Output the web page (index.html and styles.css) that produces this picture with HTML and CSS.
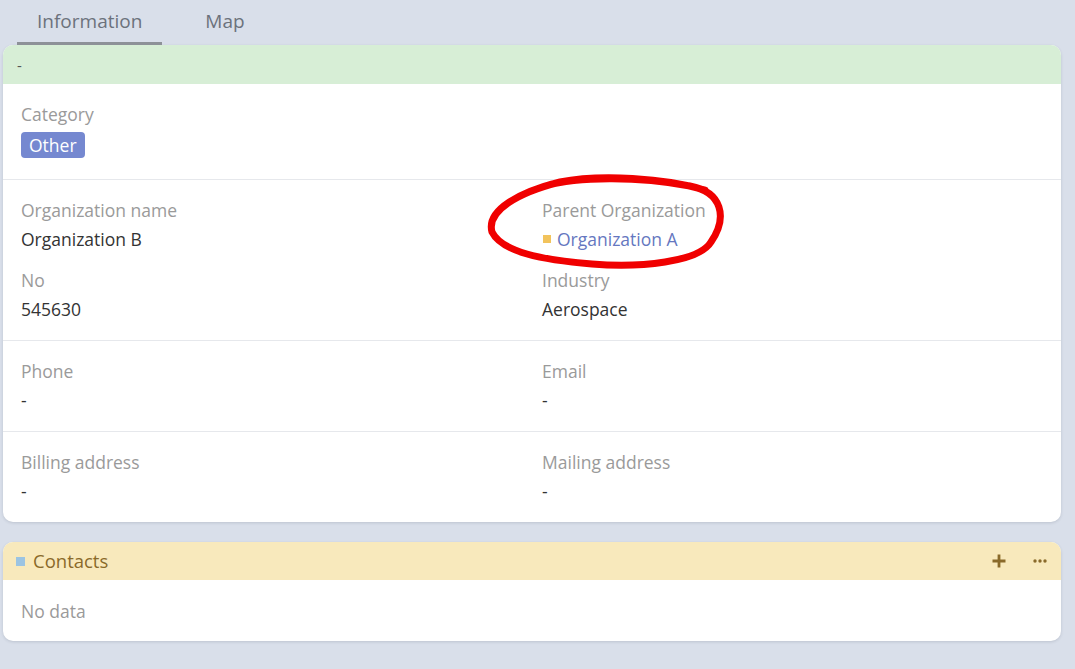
FILE: index.html
```html
<!DOCTYPE html>
<html>
<head>
<meta charset="utf-8">
<link rel="stylesheet" href="styles.css">
</head>
<body>
<div class="page">
  <div class="tabs">
    <div class="tab active">Information</div>
    <div class="tab">Map</div>
  </div>

  <div class="card">
    <div class="card-head green">-</div>
    <div class="section first">
      <div class="field">
        <div class="label">Category</div>
        <div class="value"><span class="badge">Other</span></div>
      </div>
    </div>
    <div class="section grid">
      <div class="field">
        <div class="label">Organization name</div>
        <div class="value">Organization B</div>
      </div>
      <div class="field">
        <div class="label">Parent Organization</div>
        <div class="value"><span class="sq orange"></span><span class="link">Organization A</span></div>
      </div>
      <div class="field">
        <div class="label">No</div>
        <div class="value">545630</div>
      </div>
      <div class="field">
        <div class="label">Industry</div>
        <div class="value">Aerospace</div>
      </div>
    </div>
    <div class="section grid">
      <div class="field">
        <div class="label">Phone</div>
        <div class="value">-</div>
      </div>
      <div class="field">
        <div class="label">Email</div>
        <div class="value">-</div>
      </div>
    </div>
    <div class="section grid">
      <div class="field">
        <div class="label">Billing address</div>
        <div class="value">-</div>
      </div>
      <div class="field">
        <div class="label">Mailing address</div>
        <div class="value">-</div>
      </div>
    </div>
  </div>

  <div class="card second">
    <div class="card-head yellow">
      <span class="sq blue"></span>
      <span class="title">Contacts</span>
      <span class="actions">
        <svg class="icon" viewBox="0 0 14 14" width="14" height="14"><path d="M7 0.5v13M0.5 7h13" stroke="#8a6a2a" stroke-width="2.8" stroke-linecap="butt"/></svg>
        <svg class="icon" viewBox="0 0 14 14" width="14" height="14"><circle cx="2" cy="7" r="1.7" fill="#8a6a2a"/><circle cx="7" cy="7" r="1.7" fill="#8a6a2a"/><circle cx="12" cy="7" r="1.7" fill="#8a6a2a"/></svg>
      </span>
    </div>
    <div class="nodata">No data</div>
  </div>

  <svg class="annot" viewBox="0 0 1075 669" width="1075" height="669">
    <path d="M 545 186 C 580 176, 640 177, 690 186 C 722 192, 728 217, 711 242 C 699 262, 640 268, 592 264 C 542 260, 502 252, 492 232 C 486 210, 520 192, 560 182 C 600 174, 665 178, 705 190" fill="none" stroke="#f00000" stroke-width="7" stroke-linecap="round" stroke-linejoin="round"/>
  </svg>
</div>
</body>
</html>
```

FILE: styles.css
```css
html, body {
  margin: 0;
  padding: 0;
  background: #d9dfea;
  font-family: "Open Sans", "Liberation Sans", sans-serif;
  font-size: 16px;
}
.page {
  position: relative;
  width: 1075px;
  height: 669px;
  padding: 0 14px 0 3px;
  box-sizing: border-box;
}
.tabs {
  display: flex;
  gap: 23px;
  padding-left: 14px;
  height: 45px;
}
.tab {
  padding: 0 20px;
  height: 45px;
  line-height: 42px;
  font-size: 19px;
  color: #6c727c;
  box-sizing: border-box;
}
.tab.active {
  border-bottom: 3px solid #8d9198;
}
.card {
  background: #fff;
  border-radius: 10px;
  overflow: hidden;
  box-shadow: 0 1px 3px rgba(60, 70, 90, 0.18);
}
.card.second {
  margin-top: 20px;
}
.card-head {
  display: flex;
  align-items: center;
  padding-left: 14px;
  padding-right: 14px;
  height: 39px;
  box-sizing: border-box;
  color: #555;
  font-size: 15px;
}
.card-head.green {
  background: #d7eed6;
}
.card-head.yellow {
  background: #f8e9bc;
  height: 38px;
  padding-left: 13px;
}
.title {
  color: #8a6a2a;
  font-size: 18.5px;
  line-height: 24px;
  margin-left: 8px;
}
.actions {
  margin-left: auto;
  display: flex;
  gap: 27px;
  align-items: center;
}
.icon {
  display: block;
}
.section {
  padding: 18px 18px 19px;
  border-top: 1px solid #e6e8ec;
}
.section.first {
  border-top: none;
  padding-top: 18px;
  padding-bottom: 21px;
}
.grid {
  display: grid;
  grid-template-columns: 1fr 1fr;
  column-gap: 20px;
  row-gap: 17px;
}
.label {
  color: #9a9a9a;
  font-size: 17.5px;
  line-height: 24px;
}
.value {
  color: #333;
  font-size: 17.5px;
  line-height: 24px;
  margin-top: 5px;
  display: flex;
  align-items: center;
}
.badge {
  display: inline-block;
  background: #7588d0;
  color: #fff;
  border-radius: 4px;
  padding: 0 8px;
  line-height: 26px;
  height: 26px;
  margin-top: 1px;
}
.sq {
  display: inline-block;
  width: 8px;
  height: 8px;
}
.sq.orange {
  background: #f2c35c;
  margin: 0 6px 0 1px;
}
.sq.blue {
  width: 9px;
  height: 9px;
  background: #9cc4e2;
}
.link {
  color: #6577c0;
}
.nodata {
  color: #9a9a9a;
  font-size: 17.5px;
  line-height: 24px;
  padding: 19px 18px 18px;
}
.annot {
  position: absolute;
  top: 0;
  left: 0;
  pointer-events: none;
}
```
